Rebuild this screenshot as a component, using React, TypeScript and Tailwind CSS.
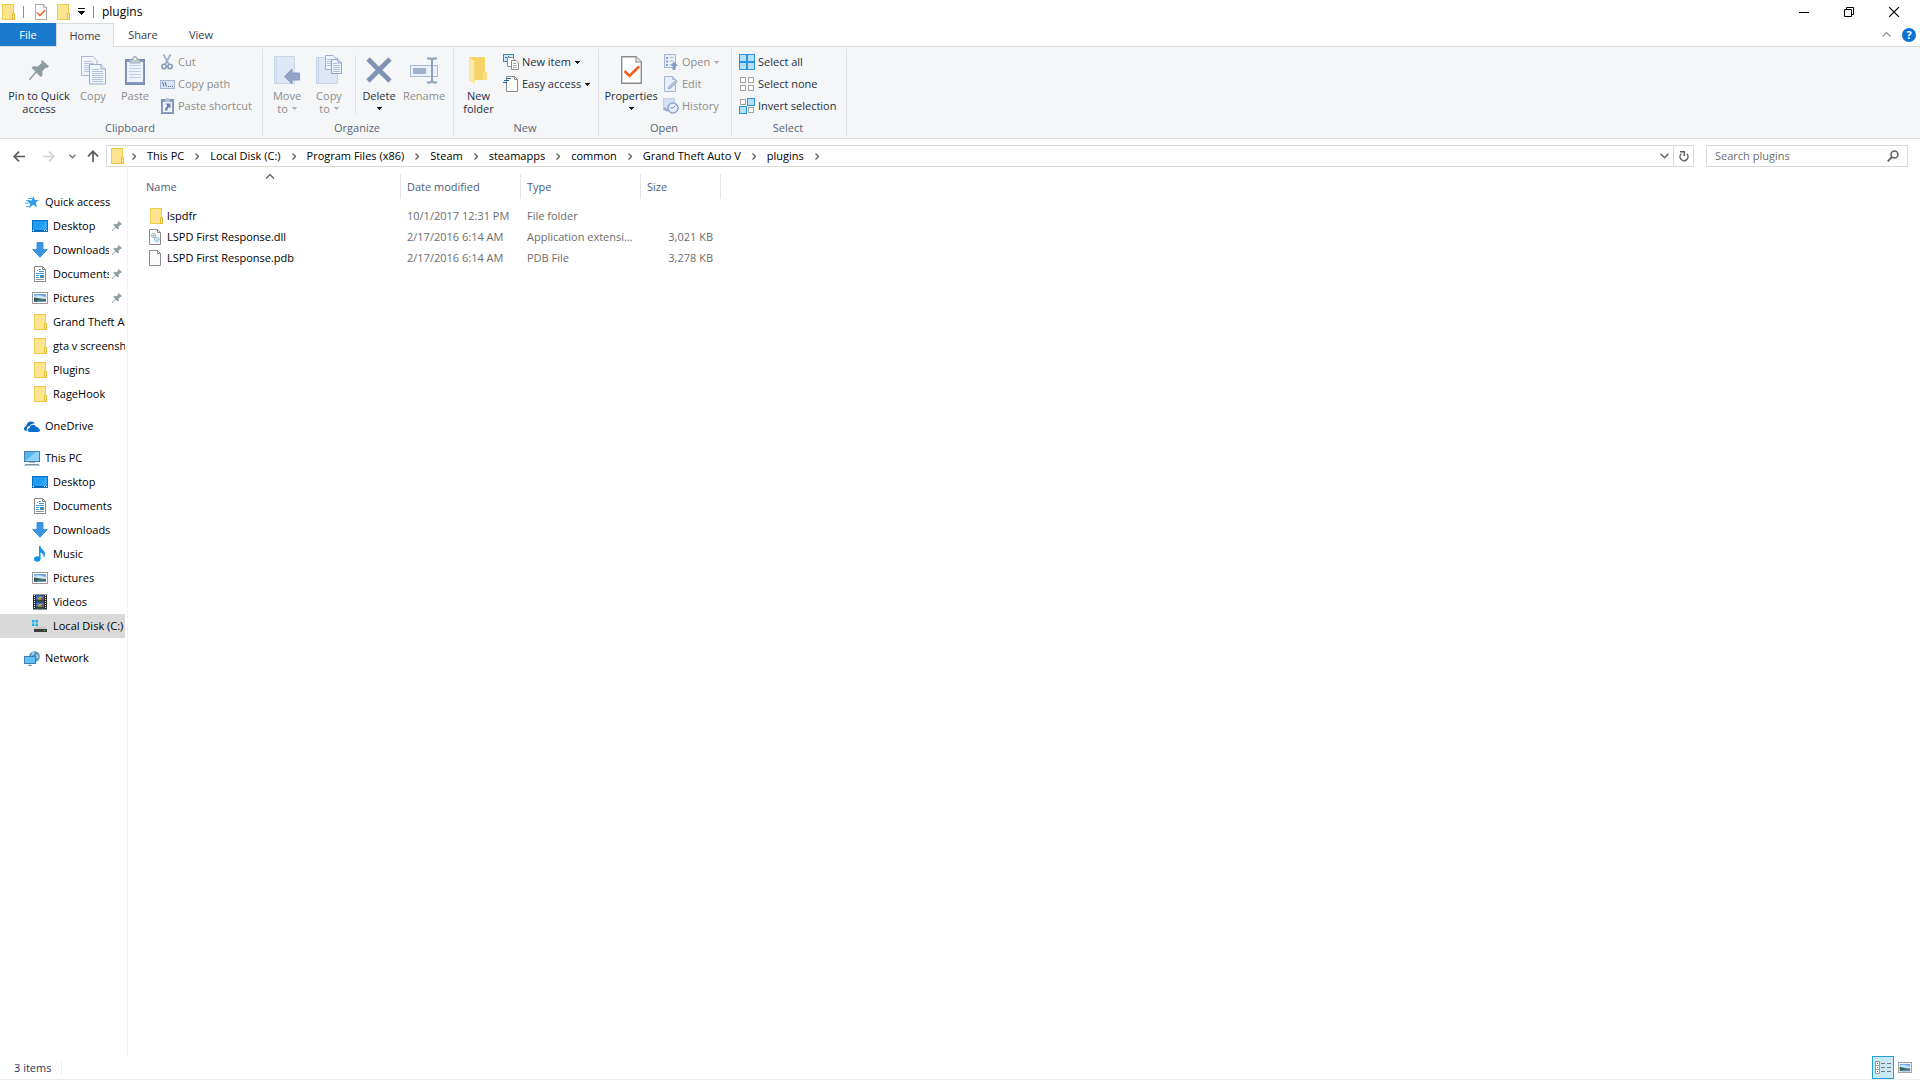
import { useState } from 'react'
import type { ReactNode } from 'react'
import clsx from 'clsx'

/* ---------- small icons ---------- */

function FolderIcon() {
  return (
    <svg width="14" height="16" viewBox="-1 0 14 16" className="shrink-0">
      <rect x="0.5" y="0.5" width="11" height="15" fill="#ffe48f" stroke="#efc94a" />
      <path d="M10.500 9.500h2v6h-2z" fill="#ffe9a2" stroke="#e6bb33" />
    </svg>
  )
}

function PinIcon({ size = 10 }: { size?: number }) {
  return (
    <svg width={size} height={size} viewBox="0 0 20 20" className="shrink-0">
      <path
        d="M13 0l7 6.200-1.800 1.800-1.400-.4-3.600 4 .4 3.600-2 1.800-4.200-4.200L1.200 20 0 19.800l.2-1L6.400 11.600 2.600 7.800l1.600-1.600 4.600.2 4-3.600-.8-1.600z"
        fill="#8f9ba3"
      />
    </svg>
  )
}

function Caret({ className = 'text-[#1c1c1c]' }: { className?: string }) {
  return (
    <svg width="5" height="3" viewBox="0 0 5 3" className={clsx('inline-block shrink-0', className)} shapeRendering="crispEdges">
      <path d="M0 0h5v1H4v1H3v1H2V2H1V1H0z" fill="currentColor" />
    </svg>
  )
}

function CheckDocIcon({ width = 12, height = 16 }: { width?: number; height?: number }) {
  return (
    <svg width={width} height={height} viewBox="0 0 21 28" className="shrink-0">
      <path d="M.7.700H15L20.300 6V27.300H.7z" fill="#fff" stroke="#8c8c8c" strokeWidth="1.400" />
      <path d="M15 .7V6h5.300" fill="#e9e9e9" stroke="#8c8c8c" strokeWidth="1.100" />
      <path d="M3.500 15l5 5L18 10.500" fill="none" stroke="#f2601f" strokeWidth="2.600" />
    </svg>
  )
}

function StarIcon() {
  return (
    <svg width="14" height="12" viewBox="0 0 14 12" className="shrink-0">
      <path d="M8.500 0l1.300 3.900H14l-3.300 2.700 1.400 5-3.900-2.800L4 12l1.300-4.600L2.500 5l3.800-.5z" fill="#2f9be4" />
      <path d="M1 4.500h4M0 7h5M1 10.500h4M3 2.500h4" stroke="#4aa8e8" />
    </svg>
  )
}

function DesktopIcon() {
  return (
    <svg width="16" height="12" viewBox="0 0 16 12" className="shrink-0">
      <rect x="0.5" y="0.5" width="15" height="11" fill="#1e9bf5" stroke="#0b6fc2" />
      <path d="M7 10L14.500 1H15v9z" fill="#2fa7fa" />
      <path d="M1 10.500h14" stroke="#0a5ca8" />
      <path d="M1 10.500h1M12 10.500h1M14 10.500h1" stroke="#fff" />
    </svg>
  )
}

function DownloadIcon() {
  return (
    <svg width="16" height="16" viewBox="0 0 16 16" className="shrink-0">
      <path d="M5 .5h6v7h4.300L8 15.300.7 7.500H5z" fill="#3b95e3" stroke="#2f80cb" strokeWidth="0.800" />
    </svg>
  )
}

function DocumentIcon() {
  return (
    <svg width="12" height="16" viewBox="0 0 12 16" className="shrink-0">
      <path d="M.5.500h8l3 3v12H.5z" fill="#fff" stroke="#8b8b8b" />
      <path d="M8.500.5v3h3" fill="none" stroke="#8b8b8b" />
      <path d="M5 3.500h2M3 4.500h1M5 5.500h5M2 7.500h8M2 9.500h3M2 11.500h3" stroke="#3f97d6" />
      <path d="M6 9h4v3H6z" fill="#4d8fb3" />
      <path d="M2 13.500h8" stroke="#8a949c" />
    </svg>
  )
}

function PictureIcon({ width = 16, height = 12 }: { width?: number; height?: number }) {
  return (
    <svg width={width} height={height} viewBox="0 0 16 12" preserveAspectRatio="none" className="shrink-0">
      <rect x="0.5" y="0.5" width="15" height="11" fill="#fff" stroke="#9b9b9b" />
      <path d="M2 2h12v4H2z" fill="#6aa9ec" />
      <path d="M2 4l4-1 8 2v2H2z" fill="#c9e2f7" />
      <path d="M2 5.500c3 0 6 1.500 12 1.500v3H2z" fill="#43707a" />
      <path d="M2 6c2 0 4 1 6 2H2z" fill="#2f5a3a" />
      <path d="M5 9.500h9" stroke="#6f9fc4" />
    </svg>
  )
}

function OneDriveIcon() {
  return (
    <svg width="16" height="11" viewBox="0 0 16 11" className="shrink-0">
      <path d="M2 10C.5 9.700 0 8.800 0 7.800c0-1.500 1-2.300 2.300-2.500C2.500 2.500 4.500.500 7 .500c1.800 0 3.200.8 4 2.200-3-.4-4.500.6-5.300 2.300C3.500 5 2 7.500 3 10z" fill="#0a64b8" />
      <path d="M6 11c-1.500 0-2.300-.9-2.300-2 0-1.200.8-2 2-2.100C5.800 5 7.300 3.700 9 3.800c1.400 0 2.500.8 3 2 1.500 0 2.300.7 2.400 1.700C15.500 7.700 16 8.400 16 9.300c0 1-.8 1.700-1.800 1.700z" fill="#0a70cf" />
    </svg>
  )
}

function ThisPcIcon() {
  return (
    <svg width="16" height="15" viewBox="0 0 16 15" className="shrink-0">
      <rect x="0.5" y="0.5" width="15" height="10" fill="#55b8f4" stroke="#4384ad" />
      <path d="M1 10L12 1h3v9z" fill="#8dd2fb" />
      <path d="M5 11.500h6" stroke="#9fb2bf" />
      <path d="M1 13.500h14" stroke="#7e93a1" />
      <path d="M0 14.500h16" stroke="#b9c4cc" />
    </svg>
  )
}

function MusicIcon() {
  return (
    <svg width="12" height="16" viewBox="0 0 12 16" className="shrink-0">
      <ellipse cx="3.300" cy="13" rx="3.200" ry="2.700" fill="#1093ec" />
      <path d="M5 0h1.500c.3 3.500 4.500 4 4.500 8 0 1.800-.7 3-1.500 4 .4-3-.6-4.800-3-5.500V13H5z" fill="#1093ec" />
    </svg>
  )
}

function VideoIcon() {
  return (
    <svg width="14" height="16" viewBox="0 0 14 16" className="shrink-0">
      <path d="M0 .500h14v15H0z" fill="#2c2c2c" />
      <path d="M1.500 1v14M12.500 1v14" stroke="#f2f2f2" strokeDasharray="1 1" />
      <path d="M3 1.500h8v6H3zM3 8.500h8v6H3z" fill="#3f78d0" />
      <path d="M3 5.500h8v2H3zM3 12.500h8v2H3z" fill="#2f4a3a" />
      <path d="M5 4.500l2-2 2 1v2H5zM5 11.500l2-2 2 1v2H5z" fill="#d2a52f" />
      <path d="M8 4h2v1H8zM8 11h2v1H8z" fill="#a8342b" />
    </svg>
  )
}

function DiskIcon() {
  return (
    <svg width="16" height="12" viewBox="0 0 16 12" className="shrink-0">
      <path d="M0 0h2.500v2.500H0zM3.500 0H6v2.500H3.500zM0 3.500h2.500V6H0zM3.500 3.500H6V6H3.500z" fill="#12b4ee" />
      <path d="M4 6.500h9L15 9H2z" fill="#c7c7c7" />
      <path d="M2 9h13v3H2z" fill="#3c3c3c" />
      <path d="M12 10.500h1" stroke="#49e04b" />
    </svg>
  )
}

function NetworkIcon() {
  return (
    <svg width="16" height="15" viewBox="0 0 16 15" className="shrink-0">
      <circle cx="10.500" cy="5.500" r="5.300" fill="#4a8fb5" />
      <path d="M8 1.500c2-1 3 0 2.500 1.500S7.500 4 7 6zM12 3c2 0 3 2 2.500 4L12.500 8z" fill="#a9d3e8" />
      <rect x="0.5" y="5.500" width="11" height="7" fill="#62c0f8" stroke="#3c82ae" />
      <path d="M4 14.500h4M6 13v1" stroke="#7ea4bb" />
    </svg>
  )
}

function FileIcon({ gears }: { gears?: boolean }) {
  return (
    <svg width="14" height="16" viewBox="0 0 14 16" className="shrink-0">
      <path d="M.5.500h8l3 3v12H.5z" fill="#fafafa" stroke="#8b8b8b" />
      <path d="M8.500.5v3h3" fill="none" stroke="#8b8b8b" />
      {gears && (
        <>
          <circle cx="4.500" cy="6.500" r="2.200" fill="#e1e6ea" stroke="#8d9aa4" strokeDasharray="1 0.500" />
          <circle cx="4.500" cy="6.500" r="0.700" fill="#7f8c96" />
          <circle cx="7.800" cy="10.500" r="2.200" fill="#cfe8f5" stroke="#6aa6c6" strokeDasharray="1 0.500" />
        </>
      )}
    </svg>
  )
}

/* ---------- ribbon icons ---------- */

function CopyIcon() {
  return (
    <svg width="25" height="29" viewBox="0 0 25 29">
      <path d="M.5.500H12L16 4.500V19.500H.5z" fill="#f0f4fb" stroke="#a9b9d6" />
      <path d="M3 5.500h8M3 7.500h10M3 9.500h5M3 11.500h5M3 13.500h5M3 15.500h5" stroke="#b8c6df" />
      <path d="M8.500 8.500H20L24.500 13V28H8.500z" fill="#f0f4fb" stroke="#9aabcc" />
      <path d="M20 8.500V13h4.500" fill="#dfe7f5" stroke="#9aabcc" />
      <path d="M11 13.500h7M11 15.500h11M11 17.500h11M11 19.500h11M11 21.500h11M11 23.500h11M11 25.500h11" stroke="#b3c2dd" />
    </svg>
  )
}

function PasteIcon() {
  return (
    <svg width="20" height="29" viewBox="0 0 20 29">
      <rect x="0.500" y="3.500" width="19" height="25" fill="#8497bd" stroke="#788cb4" />
      <rect x="2" y="6" width="16" height="20" fill="#edf2fb" />
      <path d="M4 9.500h12M4 12.500h12M4 15.500h12M4 18.500h12M4 21.500h12" stroke="#c2cee4" />
      <path d="M5 7V4h2.500C7.500 1.500 8.500.500 10 .500s2.500 1 2.500 3.500H15v3z" fill="#c5cbd6" stroke="#a2abbb" />
      <circle cx="10" cy="3" r="1" fill="#fff" />
    </svg>
  )
}

function CutIcon() {
  return (
    <svg width="12" height="16" viewBox="0 0 12 16">
      <path d="M2.500 0.500L8 10.500M9.500 0.500L4 10.500" stroke="#9fadc8" strokeWidth="1.600" />
      <circle cx="3" cy="12.500" r="2.200" fill="none" stroke="#8597bd" strokeWidth="1.500" />
      <circle cx="9" cy="12.500" r="2.200" fill="none" stroke="#8597bd" strokeWidth="1.500" />
    </svg>
  )
}

function CopyPathIcon() {
  return (
    <svg width="15" height="9" viewBox="0 0 15 9">
      <rect x="0.500" y="0.500" width="14" height="8" fill="#dbe4f4" stroke="#a8b7d3" />
      <path d="M2.500 2l1.500 4.500M5 2l1.500 4.500" stroke="#5d6f98" />
      <path d="M8 6.500h1M10 6.500h1M12 6.500h1" stroke="#5d6f98" />
    </svg>
  )
}

function PasteShortcutIcon() {
  return (
    <svg width="13" height="16" viewBox="0 0 13 16">
      <rect x="0.500" y="1.500" width="12" height="14" fill="#8c9dc1" stroke="#8093ba" />
      <path d="M2 4h9v10H2z" fill="#edf2fb" />
      <path d="M4 1.500h1.500V0h2v1.500H9V4H4z" fill="#b6bfce" />
      <path d="M4.500 5.500H9.500v5L8 9C7 9.800 6.500 11 6.300 12.500H4C4 10.500 5 9 6.300 7.500z" fill="#6d81ad" />
    </svg>
  )
}

function MoveToIcon() {
  return (
    <svg width="26" height="30" viewBox="0 0 26 30">
      <path d="M.5 1.500h20v27H.5z" fill="#dde7f6" stroke="#c6d5ec" />
      <path d="M2.500 2v26" stroke="#c6d5ec" />
      <path d="M10.500 21.500L18 14v4h7.500v7H18v4z" fill="#94a6c8" stroke="#8799bf" />
    </svg>
  )
}

function CopyToIcon() {
  return (
    <svg width="26" height="30" viewBox="0 0 26 30">
      <path d="M.5 2.500h21v26H.5z" fill="#dde7f6" stroke="#c6d5ec" />
      <path d="M2.500 3v26" stroke="#c6d5ec" />
      <path d="M9.500.500H17L20 3.500V14.500H9.500z" fill="#f0f4fb" stroke="#9fb0cf" />
      <path d="M11 4.500h4M11 6.500h4M11 8.500h4M11 10.500h4" stroke="#aebdd9" />
      <path d="M15.500 4.500H22L25.500 8V18.500H15.500z" fill="#f0f4fb" stroke="#8fa1c5" />
      <path d="M22 4.500V8h3.500" fill="none" stroke="#8fa1c5" />
      <path d="M17 8.500h4M17 10.500h7M17 12.500h7M17 14.500h7M17 16.500h7" stroke="#aebdd9" />
    </svg>
  )
}

function DeleteIcon() {
  return (
    <svg width="26" height="26" viewBox="0 0 26 26">
      <path d="M2 2l22 22M24 2L2 24" stroke="#8093b5" strokeWidth="4.600" />
    </svg>
  )
}

function RenameIcon() {
  return (
    <svg width="28" height="27" viewBox="0 0 28 27">
      <rect x="0.500" y="8.500" width="27" height="11" fill="#eaf1fb" stroke="#a9b9d6" />
      <path d="M3 11h13v6H3z" fill="#a0b1d0" />
      <path d="M17 1.500h3.500L22 3l1.500-1.500H27M22 2.500v22M17 25.500h3.500L22 24l1.500 1.500H27" fill="none" stroke="#8ea0c2" strokeWidth="2" />
    </svg>
  )
}

function NewFolderIcon() {
  return (
    <svg width="19" height="28" viewBox="0 0 19 28">
      <path d="M0 1h16v14l2 2v7H6z" fill="#f6d368" />
      <path d="M14 15.500l4 1V24h-4z" fill="#fbdf87" />
      <path d="M0 1l5.500 4v22L0 24z" fill="#ffe9a6" stroke="#f5d77c" strokeWidth="0.600" />
    </svg>
  )
}

function NewItemIcon() {
  return (
    <svg width="16" height="16" viewBox="0 0 16 16">
      <rect x="0.500" y="0.500" width="10" height="7" fill="#cfe9f8" stroke="#3f87b5" />
      <path d="M2 3.500h2M5 2.500h1" stroke="#2a73a5" />
      <path d="M4.500 3.500h5l2 2v7h-7z" fill="#fff" stroke="#8b8b8b" />
      <path d="M8.500 6.500h4.500l2.500 2.500v6.500h-7z" fill="#fff" stroke="#8b8b8b" />
      <path d="M10 9.500h3M10 11.500h4M10 13.500h4" stroke="#a9a9a9" />
    </svg>
  )
}

function EasyAccessIcon() {
  return (
    <svg width="16" height="16" viewBox="0 0 16 16">
      <path d="M3.500.500h8l3 3v12h-11z" fill="#fff" stroke="#8b8b8b" />
      <path d="M11.500.5v3h3" fill="none" stroke="#8b8b8b" />
      <path d="M3 2.500h5M1 4.500h5M0 6.500h4" stroke="#1f669c" />
    </svg>
  )
}

function OpenIcon() {
  return (
    <svg width="14" height="16" viewBox="0 0 14 16">
      <rect x="0.500" y="0.500" width="11" height="13" fill="#e9effa" stroke="#a6b5d2" />
      <path d="M2 3h2v2H2zM2 6.500h2v2H2zM2 10h2v2H2z" fill="#8da0c4" />
      <path d="M5.500 3.500h4M5.500 7h4M5.500 10.500h2" stroke="#b2c0da" />
      <path d="M10 7.500L14 12h-2.500v4h-3v-4H6.500z" fill="#8b9dc1" />
    </svg>
  )
}

function EditIcon() {
  return (
    <svg width="14" height="16" viewBox="0 0 14 16">
      <path d="M.5.500h8l3 3v12H.5z" fill="#e9effa" stroke="#a6b5d2" />
      <path d="M8.500.5v3h3" fill="none" stroke="#a6b5d2" />
      <path d="M4 13l1-2.500L12 4l1.500 1.500L6.500 12.500z" fill="#b1c0dc" stroke="#93a5c8" strokeWidth="0.700" />
    </svg>
  )
}

function HistoryIcon() {
  return (
    <svg width="16" height="16" viewBox="0 0 16 16">
      <path d="M.5.500h11v12H.5z" fill="#d3dff2" stroke="#c3d1e9" />
      <circle cx="10" cy="10" r="5" fill="#e6edf8" stroke="#96a7c8" strokeWidth="1.600" />
      <path d="M10 10l2.500-2.500M10 10H7.500" stroke="#7a8db5" />
      <path d="M1 10l4 3" stroke="#96a7c8" strokeWidth="2" />
    </svg>
  )
}

function Squares({ on }: { on: boolean[] }) {
  const spots = [
    [0, 0],
    [8, 0],
    [0, 8],
    [8, 8],
  ]
  return (
    <svg width="16" height="16" viewBox="0 0 16 16">
      {spots.map(([x, y], i) =>
        on[i] ? (
          <rect key={i} x={x + 0.5} y={y + 0.5} width="7" height="7" fill="#b5defa" stroke="#2b94de" />
        ) : (
          <rect key={i} x={x + 1.5} y={y + 1.5} width="5" height="5" fill="#fff" stroke="#a3a3a3" />
        ),
      )}
    </svg>
  )
}

/* ---------- ribbon pieces ---------- */

type BigButtonProps = {
  icon: ReactNode
  lines: string[]
  width: string
  disabled?: boolean
  menu?: boolean
}

function BigButton({ icon, lines, width, disabled, menu }: BigButtonProps) {
  const last = lines.length - 1
  return (
    <button disabled={disabled} className={clsx('flex flex-col items-center', width, disabled ? 'text-[#8d8d8d]' : 'text-[#262f3d]')}>
      <span className="my-0.5 flex h-[34px] items-center justify-center">{icon}</span>
      {lines.map((line, i) => (
        <span key={line} className="flex items-center gap-1 leading-[13px] whitespace-nowrap">
          {line}
          {menu && i === last && i > 0 && <Caret className="text-[#b3b3b3]" />}
        </span>
      ))}
      {menu && last === 0 && (
        <span className="flex h-[13px] items-center">
          <Caret />
        </span>
      )}
    </button>
  )
}

type SmallButtonProps = {
  icon: ReactNode
  label: string
  disabled?: boolean
  menu?: boolean
}

function SmallButton({ icon, label, disabled, menu }: SmallButtonProps) {
  return (
    <button disabled={disabled} className={clsx('flex h-[22px] items-center gap-[3px] whitespace-nowrap', disabled ? 'text-[#8d8d8d]' : 'text-[#262f3d]')}>
      <span className="flex w-4 justify-center">{icon}</span>
      {label}
      {menu && <Caret className={clsx('ml-px', disabled ? 'text-[#b3b3b3]' : 'text-[#1c1c1c]')} />}
    </button>
  )
}

function Group({ title, width, children }: { title: string; width: string; children: ReactNode }) {
  return (
    <section className={clsx('my-0.5 flex shrink-0 flex-col border-r border-[#e0e1e3]', width)}>
      <div className="flex h-[72px] pt-0.5">{children}</div>
      <h2 className="pr-0.5 text-center leading-[17px] text-[#5a6475]">{title}</h2>
    </section>
  )
}

function Ribbon() {
  return (
    <div className="flex h-[92px] border-b border-[#d9dadc] bg-[#f5f6f7]">
      <Group title="Clipboard" width="w-[263px]">
        <BigButton icon={<PinIcon size={20} />} lines={['Pin to Quick', 'access']} width="w-[72px] ml-[3px]" />
        <BigButton icon={<CopyIcon />} lines={['Copy']} width="w-[36px]" disabled />
        <BigButton icon={<PasteIcon />} lines={['Paste']} width="w-[48px]" disabled />
        <div>
          <SmallButton icon={<CutIcon />} label="Cut" disabled />
          <SmallButton icon={<CopyPathIcon />} label="Copy path" disabled />
          <SmallButton icon={<PasteShortcutIcon />} label="Paste shortcut" disabled />
        </div>
      </Group>
      <Group title="Organize" width="w-[191px]">
        <BigButton icon={<MoveToIcon />} lines={['Move', 'to']} width="w-[48px]" disabled menu />
        <BigButton icon={<CopyToIcon />} lines={['Copy', 'to']} width="w-[36px]" disabled menu />
        <span className="my-1 mr-1 ml-2 w-px bg-[#e0e1e3]" />
        <BigButton icon={<DeleteIcon />} lines={['Delete']} width="w-[38px]" menu />
        <BigButton icon={<RenameIcon />} lines={['Rename']} width="w-[52px]" disabled />
      </Group>
      <Group title="New" width="w-[145px]">
        <BigButton icon={<NewFolderIcon />} lines={['New', 'folder']} width="w-[49px]" />
        <div>
          <SmallButton icon={<NewItemIcon />} label="New item" menu />
          <SmallButton icon={<EasyAccessIcon />} label="Easy access" menu />
        </div>
      </Group>
      <Group title="Open" width="w-[133px]">
        <BigButton icon={<CheckDocIcon width={21} height={28} />} lines={['Properties']} width="w-[64px]" menu />
        <div>
          <SmallButton icon={<OpenIcon />} label="Open" disabled menu />
          <SmallButton icon={<EditIcon />} label="Edit" disabled />
          <SmallButton icon={<HistoryIcon />} label="History" disabled />
        </div>
      </Group>
      <Group title="Select" width="w-[115px]">
        <div className="pl-[7px]">
          <SmallButton icon={<Squares on={[true, true, true, true]} />} label="Select all" />
          <SmallButton icon={<Squares on={[false, false, false, false]} />} label="Select none" />
          <SmallButton icon={<Squares on={[false, true, true, false]} />} label="Invert selection" />
        </div>
      </Group>
    </div>
  )
}

/* ---------- title bar and tabs ---------- */

function TitleBar() {
  return (
    <header className="flex h-[23px] items-center">
      <div className="flex items-center pl-px">
        <FolderIcon />
        <span className="mx-2 h-3 w-px bg-[#8f8f8f]" />
        <button aria-label="Properties" className="ml-[3px]">
          <CheckDocIcon />
        </button>
        <button aria-label="New folder" className="ml-[9px]">
          <FolderIcon />
        </button>
        <button aria-label="Customize Quick Access Toolbar" className="ml-2">
          <svg width="7" height="7" viewBox="0 0 7 7" shapeRendering="crispEdges">
            <path d="M0 0h7v1H0zM0 3h7v1H6v1H5v1H4v1H3V6H2V5H1V4H0z" fill="#111" />
          </svg>
        </button>
        <span className="mx-2 h-3 w-px bg-[#8f8f8f]" />
      </div>
      <h1 className="flex-1 text-[12px] text-black">plugins</h1>
      <div className="flex pr-[3px]">
        <button aria-label="Minimize" className="flex h-5 w-[45px] items-center justify-center">
          <svg width="11" height="10" viewBox="0 0 11 10">
            <path d="M0 5.500h10" stroke="#000" />
          </svg>
        </button>
        <button aria-label="Restore" className="flex h-5 w-[45px] items-center justify-center">
          <svg width="11" height="10" viewBox="0 0 11 10">
            <path d="M.5 2.500h7v7h-7zM2.500 2.500v-2h7v7h-2" fill="none" stroke="#000" />
          </svg>
        </button>
        <button aria-label="Close" className="flex h-5 w-[45px] items-center justify-center">
          <svg width="11" height="10" viewBox="0 0 11 10">
            <path d="M0 0l10 10M10 0L0 10" stroke="#000" strokeWidth="1.100" />
          </svg>
        </button>
      </div>
    </header>
  )
}

const tabs = ['Home', 'Share', 'View']

function TabBar() {
  const [active, setActive] = useState('Home')
  return (
    <div className="flex h-6 border-b border-[#d9dadc]">
      <button className="h-[23px] w-14 bg-[#1979ca] text-white">File</button>
      {tabs.map((tab) => (
        <button
          key={tab}
          onClick={() => setActive(tab)}
          className={clsx(
            'w-[58px] text-[#3b3b4b]',
            active === tab ? 'h-6 border-x border-t border-[#d9dadc] bg-[#f5f6f7]' : 'h-[23px]',
          )}
        >
          {tab}
        </button>
      ))}
      <div className="ml-auto flex items-center gap-[11px] pr-1">
        <button aria-label="Minimize the Ribbon">
          <svg width="9" height="5" viewBox="0 0 9 5">
            <path d="M.5 4.500l4-4 4 4" fill="none" stroke="#909090" strokeWidth="1.200" />
          </svg>
        </button>
        <button aria-label="Help" className="h-[14px] w-[14px] rounded-full bg-[#0a73d3] text-center leading-[14px] font-bold text-white">
          ?
        </button>
      </div>
    </div>
  )
}

/* ---------- address bar ---------- */

const crumbs = ['This PC', 'Local Disk (C:)', 'Program Files (x86)', 'Steam', 'steamapps', 'common', 'Grand Theft Auto V', 'plugins']

function Chevron() {
  return (
    <svg width="4" height="7" viewBox="0 0 4 7" className="shrink-0">
      <path d="M.5.500l3 3-3 3" fill="none" stroke="#5f5f5f" strokeWidth="1.300" />
    </svg>
  )
}

function AddressBar() {
  return (
    <div className="flex h-7 items-end">
      <div className="flex h-[22px] w-[106px] items-center pl-[13px]">
        <button aria-label="Back">
          <svg width="12" height="11" viewBox="0 0 12 11">
            <path d="M12 5.500H1.500M6 .7L1.200 5.500 6 10.300" fill="none" stroke="#5c5c5c" strokeWidth="1.700" />
          </svg>
        </button>
        <button aria-label="Forward" disabled className="ml-[18px]">
          <svg width="12" height="11" viewBox="0 0 12 11">
            <path d="M0 5.500h10.500M6 .7l4.800 4.800L6 10.300" fill="none" stroke="#d2d2d2" strokeWidth="1.700" />
          </svg>
        </button>
        <button aria-label="Recent locations" className="ml-3.5">
          <svg width="7" height="5" viewBox="0 0 7 5">
            <path d="M.5.700l3 3 3-3" fill="none" stroke="#777" strokeWidth="1.500" />
          </svg>
        </button>
        <button aria-label="Up" className="ml-[11px]">
          <svg width="12" height="12" viewBox="0 0 12 12">
            <path d="M6 12V1.500M1 6.300l5-5 5 5" fill="none" stroke="#5c5c5c" strokeWidth="1.700" />
          </svg>
        </button>
      </div>
      <div className="flex h-[22px] flex-1 items-center border border-[#d9d9d9] pl-[3px] text-black">
        <FolderIcon />
        <span className="ml-2">
          <Chevron />
        </span>
        <nav className="flex flex-1 items-center" aria-label="Path">
          {crumbs.map((crumb) => (
            <span key={crumb} className="flex items-center gap-[11px] pl-[11px]">
              <a href="#" className="whitespace-nowrap">
                {crumb}
              </a>
              <Chevron />
            </span>
          ))}
        </nav>
        <button aria-label="Previous locations" className="px-1">
          <svg width="9" height="6" viewBox="0 0 9 6">
            <path d="M.5.700l4 4 4-4" fill="none" stroke="#666" strokeWidth="1.600" />
          </svg>
        </button>
        <button aria-label="Refresh" className="flex h-full w-5 items-center justify-center border-l border-[#d9d9d9]">
          <svg width="10" height="11" viewBox="0 0 10 11">
            <path d="M2.300 2.700A4 4 0 1 0 8 3" fill="none" stroke="#5f5f5f" strokeWidth="1.500" />
            <path d="M1 .7h4.300V5" fill="none" stroke="#5f5f5f" strokeWidth="1.500" />
          </svg>
        </button>
      </div>
      <label className="mx-3 flex h-[22px] w-[202px] items-center border border-[#d9d9d9] px-2">
        <input type="search" aria-label="Search plugins" placeholder="Search plugins" className="min-w-0 flex-1 outline-none placeholder:text-[#6d6d6d]" />
        <svg width="12" height="12" viewBox="0 0 12 12">
          <circle cx="7.500" cy="4.500" r="3.500" fill="none" stroke="#5f5f5f" strokeWidth="1.500" />
          <path d="M5 7L.7 11.300" stroke="#5f5f5f" strokeWidth="1.800" />
        </svg>
      </label>
    </div>
  )
}

/* ---------- navigation pane ---------- */

type Item = { label: string; icon: ReactNode; pinned?: boolean; selected?: boolean }
type Section = { root: Item; items: Item[] }

const sections: Section[] = [
  {
    root: { label: 'Quick access', icon: <StarIcon /> },
    items: [
      { label: 'Desktop', icon: <DesktopIcon />, pinned: true },
      { label: 'Downloads', icon: <DownloadIcon />, pinned: true },
      { label: 'Documents', icon: <DocumentIcon />, pinned: true },
      { label: 'Pictures', icon: <PictureIcon />, pinned: true },
      { label: 'Grand Theft Auto V', icon: <FolderIcon /> },
      { label: 'gta v screenshots', icon: <FolderIcon /> },
      { label: 'Plugins', icon: <FolderIcon /> },
      { label: 'RageHook', icon: <FolderIcon /> },
    ],
  },
  { root: { label: 'OneDrive', icon: <OneDriveIcon /> }, items: [] },
  {
    root: { label: 'This PC', icon: <ThisPcIcon /> },
    items: [
      { label: 'Desktop', icon: <DesktopIcon /> },
      { label: 'Documents', icon: <DocumentIcon /> },
      { label: 'Downloads', icon: <DownloadIcon /> },
      { label: 'Music', icon: <MusicIcon /> },
      { label: 'Pictures', icon: <PictureIcon /> },
      { label: 'Videos', icon: <VideoIcon /> },
      { label: 'Local Disk (C:)', icon: <DiskIcon />, selected: true },
    ],
  },
  { root: { label: 'Network', icon: <NetworkIcon /> }, items: [] },
]

function NavItem({ item, child }: { item: Item; child?: boolean }) {
  return (
    <a href="#" className={clsx('flex h-6 items-center overflow-hidden', child ? 'pl-8' : 'pl-6', item.selected && 'bg-[#d9d9d9]')}>
      <span className="flex w-4 shrink-0 justify-center">{item.icon}</span>
      <span className="ml-[5px] flex-1 overflow-hidden whitespace-nowrap">{item.label}</span>
      {item.pinned && (
        <span className="mx-[3px]">
          <PinIcon />
        </span>
      )}
    </a>
  )
}

function NavPane() {
  return (
    <nav aria-label="Folders" className="flex w-32 shrink-0 flex-col gap-2 border-r border-[#f3f3f3] pt-[23px] pr-0.5 text-black">
      {sections.map(({ root, items }) => (
        <div key={root.label}>
          <NavItem item={root} />
          {items.map((item) => (
            <NavItem key={item.label} item={item} child />
          ))}
        </div>
      ))}
    </nav>
  )
}

/* ---------- file list ---------- */

const files = [
  { name: 'lspdfr', date: '10/1/2017 12:31 PM', type: 'File folder', size: '', icon: <FolderIcon /> },
  { name: 'LSPD First Response.dll', date: '2/17/2016 6:14 AM', type: 'Application extension', size: '3,021 KB', icon: <FileIcon gears /> },
  { name: 'LSPD First Response.pdb', date: '2/17/2016 6:14 AM', type: 'PDB File', size: '3,278 KB', icon: <FileIcon /> },
]

const columns = [
  { label: 'Name', width: 'w-[261px]' },
  { label: 'Date modified', width: 'w-[120px]' },
  { label: 'Type', width: 'w-[120px]' },
  { label: 'Size', width: 'w-[80px]' },
]

function FileList() {
  return (
    <main className="flex-1 pt-[7px] pl-3">
      <table className="w-[581px] table-fixed border-collapse text-left">
        <thead>
          <tr>
            {columns.map((col, i) => (
              <th key={col.label} className={clsx('h-[31px] p-0 align-top font-normal text-[#4c607a]', col.width)}>
                <div className="relative flex h-[25px] items-center border-r border-[#e5e5e5] pl-1.5">
                  {col.label}
                  {i === 0 && (
                    <svg width="9" height="5" viewBox="0 0 9 5" className="absolute top-0 left-1/2 -translate-x-1/2">
                      <path d="M.5 4.500l4-4 4 4" fill="none" stroke="#5d5d5d" strokeWidth="1.200" />
                    </svg>
                  )}
                </div>
              </th>
            ))}
          </tr>
        </thead>
        <tbody className="text-[#6d6d6d]">
          {files.map((file) => (
            <tr key={file.name} className="h-[21px]">
              <td className="p-0 pl-2 text-black">
                <div className="flex items-center gap-[3px]">
                  <span className="flex w-4 justify-center">{file.icon}</span>
                  {file.name}
                </div>
              </td>
              <td className="truncate p-0 pl-1.5">{file.date}</td>
              <td className="truncate p-0 pr-2 pl-1.5">{file.type}</td>
              <td className="p-0 pr-2 text-right">{file.size}</td>
            </tr>
          ))}
        </tbody>
      </table>
    </main>
  )
}

function StatusBar() {
  return (
    <footer className="flex h-6 items-center border-b border-[#ececec] pl-3.5 text-[#1e395b]">
      <span className="w-12 border-r border-[#ececec] leading-3">3 items</span>
      <div className="ml-auto flex h-full items-center gap-1 pr-2">
        <button aria-label="Details view" className="flex h-[23px] w-[22px] items-center justify-center border border-[#26a0da] bg-[#cbe8f6]">
          <svg width="16" height="13" viewBox="0 0 16 13">
            <path d="M.5.500h4v12h-4zM.5 4.500h4M.5 8.500h4" fill="#fff" stroke="#9a9a9a" />
            <path d="M2 2.500h1" stroke="#4b7a4b" />
            <path d="M2 6.500h1" stroke="#2b7fd0" />
            <path d="M2 10.500h1" stroke="#d02b2b" />
            <path d="M6 2.500h4M12 2.500h4M6 6.500h4M12 6.500h4M6 10.500h4M12 10.500h4" stroke="#7a7a7a" />
          </svg>
        </button>
        <button aria-label="Large icons view">
          <PictureIcon width={14} height={11} />
        </button>
      </div>
    </footer>
  )
}

export default function App() {
  return (
    <div className="flex h-screen flex-col bg-white font-['Open_Sans','Noto_Sans',sans-serif] text-[11px] leading-4">
      <TitleBar />
      <TabBar />
      <Ribbon />
      <AddressBar />
      <div className="flex min-h-0 flex-1">
        <NavPane />
        <FileList />
      </div>
      <StatusBar />
    </div>
  )
}
